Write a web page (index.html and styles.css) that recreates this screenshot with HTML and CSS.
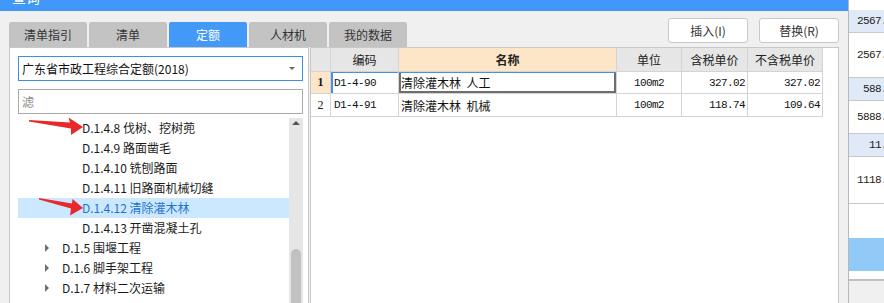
FILE: index.html
```html
<!DOCTYPE html>
<html lang="zh-CN">
<head>
<meta charset="utf-8">
<title>查询</title>
<link rel="stylesheet" href="styles.css">
</head>
<body>
<div class="app">
  <div class="dialog">
    <div class="titlebar"><span class="title">查询</span></div>
    <div class="body">
      <div class="toprow">
        <div class="tabs">
          <div class="tab">清单指引</div>
          <div class="tab">清单</div>
          <div class="tab active">定额</div>
          <div class="tab">人材机</div>
          <div class="tab">我的数据</div>
        </div>
        <div class="buttons">
          <button class="btn">插入(I)</button>
          <button class="btn">替换(R)</button>
        </div>
      </div>
      <div class="main">
        <div class="leftpanel">
          <div class="select"><span>广东省市政工程综合定额(2018)</span><i class="caret"></i></div>
          <div class="filter">滤</div>
          <div class="treewrap">
            <ul class="tree">
              <li class="node leaf">D.1.4.8 伐树、挖树蔸</li>
              <li class="node leaf">D.1.4.9 路面凿毛</li>
              <li class="node leaf">D.1.4.10 铣刨路面</li>
              <li class="node leaf">D.1.4.11 旧路面机械切缝</li>
              <li class="node leaf selected">D.1.4.12 清除灌木林</li>
              <li class="node leaf">D.1.4.13 开凿混凝土孔</li>
              <li class="node branch"><i class="expander"></i>D.1.5 围堰工程</li>
              <li class="node branch"><i class="expander"></i>D.1.6 脚手架工程</li>
              <li class="node branch"><i class="expander"></i>D.1.7 材料二次运输</li>
            </ul>
            <div class="scrollbar"><i class="up"></i><div class="thumb"></div></div>
          </div>
        </div>
        <div class="rightpanel">
          <div class="grid">
            <div class="hcell"></div>
            <div class="hcell">编码</div>
            <div class="hcell name">名称</div>
            <div class="hcell">单位</div>
            <div class="hcell">含税单价</div>
            <div class="hcell">不含税单价</div>

            <div class="cell rownum current">1</div>
            <div class="cell code cur-code">D1-4-90</div>
            <div class="cell text cur-name">清除灌木林  人工</div>
            <div class="cell unit">100m2</div>
            <div class="cell num">327.02</div>
            <div class="cell num">327.02</div>

            <div class="cell rownum">2</div>
            <div class="cell code">D1-4-91</div>
            <div class="cell text">清除灌木林  机械</div>
            <div class="cell unit">100m2</div>
            <div class="cell num">118.74</div>
            <div class="cell num">109.64</div>
          </div>
        </div>
      </div>
    </div>
  </div>
  <div class="strip">
    <div class="srow h10"></div>
    <div class="srow alt h22">2567.89</div>
    <div class="srow h44">2567.89</div>
    <div class="srow alt h22">588.89</div>
    <div class="srow h32">5888.89</div>
    <div class="srow alt h22">11.89</div>
    <div class="srow h46">1118.89</div>
    <div class="srow h33 nb"></div>
    <div class="srow sel h32 nb"></div>
    <div class="srow h10 thick"></div>
    <div class="srest"></div>
  </div>
  <svg class="marks" width="884" height="303" viewBox="0 0 884 303">
    <polygon points="29,120 70,122.5 68.5,117.5 83,127 71,135 71,128.5 29,121.5" fill="#e8282b"/>
    <polygon points="39,198 72,203.5 72.5,199 83,208 70,215.5 71,208.5 39,199.5" fill="#e8282b"/>
  </svg>
</div>
</body>
</html>
```

FILE: styles.css
```css
* { box-sizing: border-box; }
html, body { margin: 0; padding: 0; }
body {
  width: 884px;
  height: 303px;
  overflow: hidden;
  background: #ffffff;
  font-family: "Noto Sans CJK SC", sans-serif;
  font-size: 12px;
  color: #1a1a1a;
}
.app {
  position: relative;
  display: flex;
  width: 884px;
  height: 303px;
}
.dialog {
  width: 848px;
  display: flex;
  flex-direction: column;
  background: #f0f0f0;
  overflow: hidden;
}
.titlebar {
  flex: none;
  height: 11px;
  background: #4198f8;
  overflow: hidden;
  padding-left: 12px;
}
.title {
  display: block;
  margin-top: -10px;
  color: #ffffff;
  font-size: 14px;
  line-height: 14px;
}
.body {
  flex: 1;
  min-height: 0;
  display: flex;
  flex-direction: column;
  padding: 0 9px 0 9px;
}
.toprow {
  flex: none;
  height: 36px;
  display: flex;
  justify-content: space-between;
}
.tabs {
  display: flex;
  align-items: flex-end;
  gap: 2px;
}
.tab {
  width: 78px;
  height: 25px;
  line-height: 25px;
  text-align: center;
  background: #c3c3c3;
  color: #333333;
  border-radius: 2px 2px 0 0;
}
.tab.active {
  background: #4299f8;
  color: #ffffff;
}
.buttons {
  display: flex;
  gap: 11px;
  margin-top: 7px;
  align-self: flex-start;
}
.btn {
  width: 80px;
  height: 25px;
  background: #ffffff;
  border: 1px solid #c8c8c8;
  border-radius: 3px;
  font-family: "Noto Sans CJK SC", sans-serif;
  font-size: 12px;
  color: #333333;
  padding: 0;
}
.main {
  flex: 1;
  min-height: 0;
  display: flex;
  gap: 1px;
  overflow: hidden;
}
.leftpanel {
  width: 300px;
  background: #ffffff;
  border: 1px solid #c8c8c8;
  border-bottom: none;
  padding: 8px 5px 0 8px;
  display: flex;
  flex-direction: column;
}
.select {
  flex: none;
  height: 25px;
  border: 1px solid #3d8fe6;
  display: flex;
  align-items: center;
  justify-content: space-between;
  padding: 0 7px 0 3px;
  color: #111111;
}
.caret {
  width: 0;
  height: 0;
  border-left: 3px solid transparent;
  border-right: 3px solid transparent;
  border-top: 3px solid #6a6a6a;
}
.filter {
  flex: none;
  margin-top: 8px;
  height: 25px;
  line-height: 23px;
  border: 1px solid #a9a9a9;
  padding-left: 3px;
  color: #8c8c8c;
}
.treewrap {
  margin-top: 4px;
  flex: 1;
  min-height: 0;
  display: flex;
  overflow: hidden;
}
.tree {
  list-style: none;
  margin: 0;
  padding: 0;
  width: 271px;
}
.node {
  height: 20px;
  line-height: 20px;
  white-space: nowrap;
  display: flex;
  align-items: center;
}
.leaf { padding-left: 64px; }
.branch { padding-left: 27px; }
.selected {
  background: #cce8ff;
  color: #1f73d3;
}
.expander {
  width: 0;
  height: 0;
  border-top: 4px solid transparent;
  border-bottom: 4px solid transparent;
  border-left: 4px solid #707070;
  margin-right: 13px;
}
.scrollbar {
  width: 14px;
  background: #e6e6e6;
  display: flex;
  flex-direction: column;
  align-items: center;
}
.up {
  margin-top: 3px;
  width: 0;
  height: 0;
  border-left: 4px solid transparent;
  border-right: 4px solid transparent;
  border-bottom: 4px solid #555555;
}
.thumb {
  flex: none;
  margin-top: 124px;
  width: 10px;
  height: 80px;
  background: #c1c1c1;
  border-radius: 5px 5px 0 0;
}
.rightpanel {
  width: 529px;
  background: #ffffff;
  border: 1px solid #c8c8c8;
  border-bottom: none;
}
.grid {
  display: grid;
  grid-template-columns: 20px 68px 218px 65px 66px 75px;
  grid-template-rows: 24px 22px 23px;
  width: 512px;
}
.hcell, .cell {
  border-right: 1px solid #d4d4d4;
  border-bottom: 1px solid #d4d4d4;
  display: flex;
  align-items: center;
  white-space: pre;
  overflow: hidden;
}
.hcell {
  background: #e6e6e6;
  justify-content: center;
  color: #222222;
}
.hcell.name {
  background: #fde6c8;
  font-weight: bold;
}
.rownum {
  justify-content: center;
  font-family: "Liberation Serif", serif;
  font-size: 12px;
  background: #ffffff;
}
.rownum.current {
  background: #fde6c8;
  font-weight: bold;
}
.code, .num, .unit {
  font-family: "Liberation Mono", monospace;
  font-size: 11px;
  letter-spacing: -0.6px;
  color: #111111;
}
.code { padding-left: 3px; }
.unit { justify-content: center; }
.num { justify-content: flex-end; padding-right: 2px; }
.text { padding-left: 2px; color: #111111; }
.cur-code {
  box-shadow: inset 2px 0 0 #4a90e2, inset 0 1px 0 #4a90e2;
}
.cur-name {
  box-shadow: inset 0 1px 0 #4a90e2, inset 2px 0 0 #6e6e6e, inset -2px 0 0 #6e6e6e, inset 0 -2px 0 #6e6e6e;
}
.strip {
  width: 36px;
  border-left: 1px solid #b8b8b8;
  overflow: hidden;
  display: flex;
  flex-direction: column;
}
.srow {
  width: 50px;
  flex: none;
  border-bottom: 1px solid #cacaca;
  display: flex;
  align-items: center;
  justify-content: flex-end;
  font-family: "Liberation Mono", monospace;
  font-size: 11px;
  letter-spacing: -0.6px;
  color: #222222;
  background: #ffffff;
}
.srow.alt { background: #dfe9f8; }
.srow.sel { background: #91c9f7; }
.srow.nb { border-bottom: none; }
.srow.thick { border-bottom: 2px solid #c0c0c0; }
.h10 { height: 10px; border-bottom: none; }
.h22 { height: 23px; }
.h32 { height: 33px; }
.h33 { height: 34px; }
.h44 { height: 45px; }
.h46 { height: 47px; }
.srest {
  flex: 1;
  width: 50px;
  background: #f0f0f0;
}
.marks {
  position: absolute;
  left: 0;
  top: 0;
  pointer-events: none;
}
```
